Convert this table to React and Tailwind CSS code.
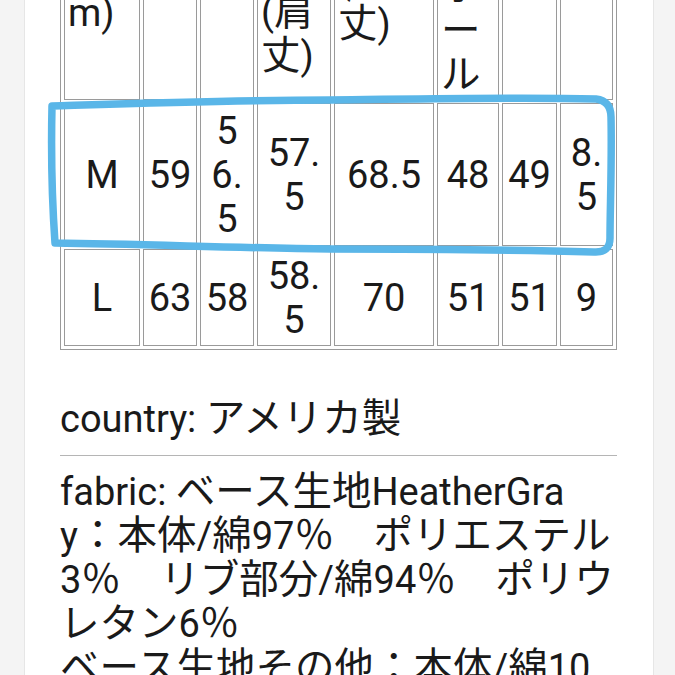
const HEADER = [
  { lines: ['サイ', 'ズ(c', 'm)'], pb: 'pb-[64px]' },
  { lines: ['身', '幅'], pb: 'pb-[98px]' },
  { lines: ['肩', '幅'], pb: 'pb-[98px]' },
  { lines: ['着', '丈', '(肩', '丈)'], pb: 'pb-[21px]' },
  { lines: ['着丈', '(総', '丈)'], pb: 'pb-[53px]' },
  { lines: ['ア', 'ー', 'ム', 'ホ', 'ー', 'ル'], pb: 'pb-[2px]' },
  { lines: ['袖', '丈'], pb: 'pb-[98px]' },
  { lines: ['裾', '幅'], pb: 'pb-[98px]' },
];

const ROWS = [
  [['M'], ['59'], ['5', '6.', '5'], ['57.', '5'], ['68.5'], ['48'], ['49'], ['8.', '5']],
  [['L'], ['63'], ['58'], ['58.', '5'], ['70'], ['51'], ['51'], ['9']],
];

const FABRIC = [
  'fabric: ベース生地HeatherGra',
  'y：本体/綿97％　ポリエステル',
  '3％　リブ部分/綿94％　ポリウ',
  'レタン6％',
  'ベース生地その他：本体/綿10',
];

const cell = 'border border-[#9a9a9a] overflow-hidden';

// japanese runs render a touch larger than the latin ones
const Jp = ({ text }) =>
  text.split(/([\u3000-\u30ff\u4e00-\u9fff\uff00-\uffef]+)/).map((part, i) =>
    i % 2 ? (
      <span key={i} className="text-[39.5px]">
        {part}
      </span>
    ) : (
      part
    )
  );

export default function App() {
  return (
    <div className="relative min-h-screen overflow-hidden bg-[#f4f4f4] text-[#1a1a1a] font-['Roboto','Noto_Sans_CJK_JP',sans-serif] text-[38px] leading-[44px]">
      <div className="ml-[24px] w-[630px] min-h-[900px] bg-white border-x border-[#e6e6e6] pl-[35px] pr-[36px]">
        {/* size table, header row runs off the top */}
        <div className="-mt-[132px] grid w-max grid-cols-[76px_54px_54px_74px_100px_62px_55px_53px] grid-rows-[228px_143px_97px] gap-[3px] p-[3px] border border-[#9a9a9a]">
          {HEADER.map((h, i) => (
            <div key={`h${i}`} className={`${cell} flex flex-col justify-end pl-[3px] whitespace-nowrap ${h.pb}`}>
              {h.lines.map((l, j) => (
                <div key={j}>
                  <Jp text={l} />
                </div>
              ))}
            </div>
          ))}
          {ROWS.map((row, r) =>
            row.map((lines, i) => (
              <div key={`${r}-${i}`} className={`${cell} flex flex-col items-center justify-center text-center whitespace-nowrap`}>
                {lines.map((l, j) => (
                  <div key={j}>{l}</div>
                ))}
              </div>
            ))
          )}
        </div>

        <div className="mt-[47px] pb-[14px] border-b border-[#b5b5b5]">
          <Jp text="country: アメリカ製" />
        </div>
        <div className="pt-[14px] whitespace-nowrap">
          {FABRIC.map((l, i) => (
            <div key={i}>
              <Jp text={l} />
            </div>
          ))}
        </div>
      </div>

      {/* hand-drawn highlight around the M row */}
      <svg className="pointer-events-none absolute left-0 top-0" width="675" height="675" viewBox="0 0 675 675">
        <path
          d="M55 243 C52 200 51 150 52 106 C150 103 240 100 330 100 C420 99 520 97 596 99 Q611 101 611 117 C612 160 610 210 610 238 Q610 253 594 252 C520 250 420 249 330 249 C240 248 140 244 55 243"
          fill="none"
          stroke="#5ab6e8"
          strokeWidth="7.5"
          strokeLinecap="round"
          strokeLinejoin="round"
        />
      </svg>
    </div>
  );
}
